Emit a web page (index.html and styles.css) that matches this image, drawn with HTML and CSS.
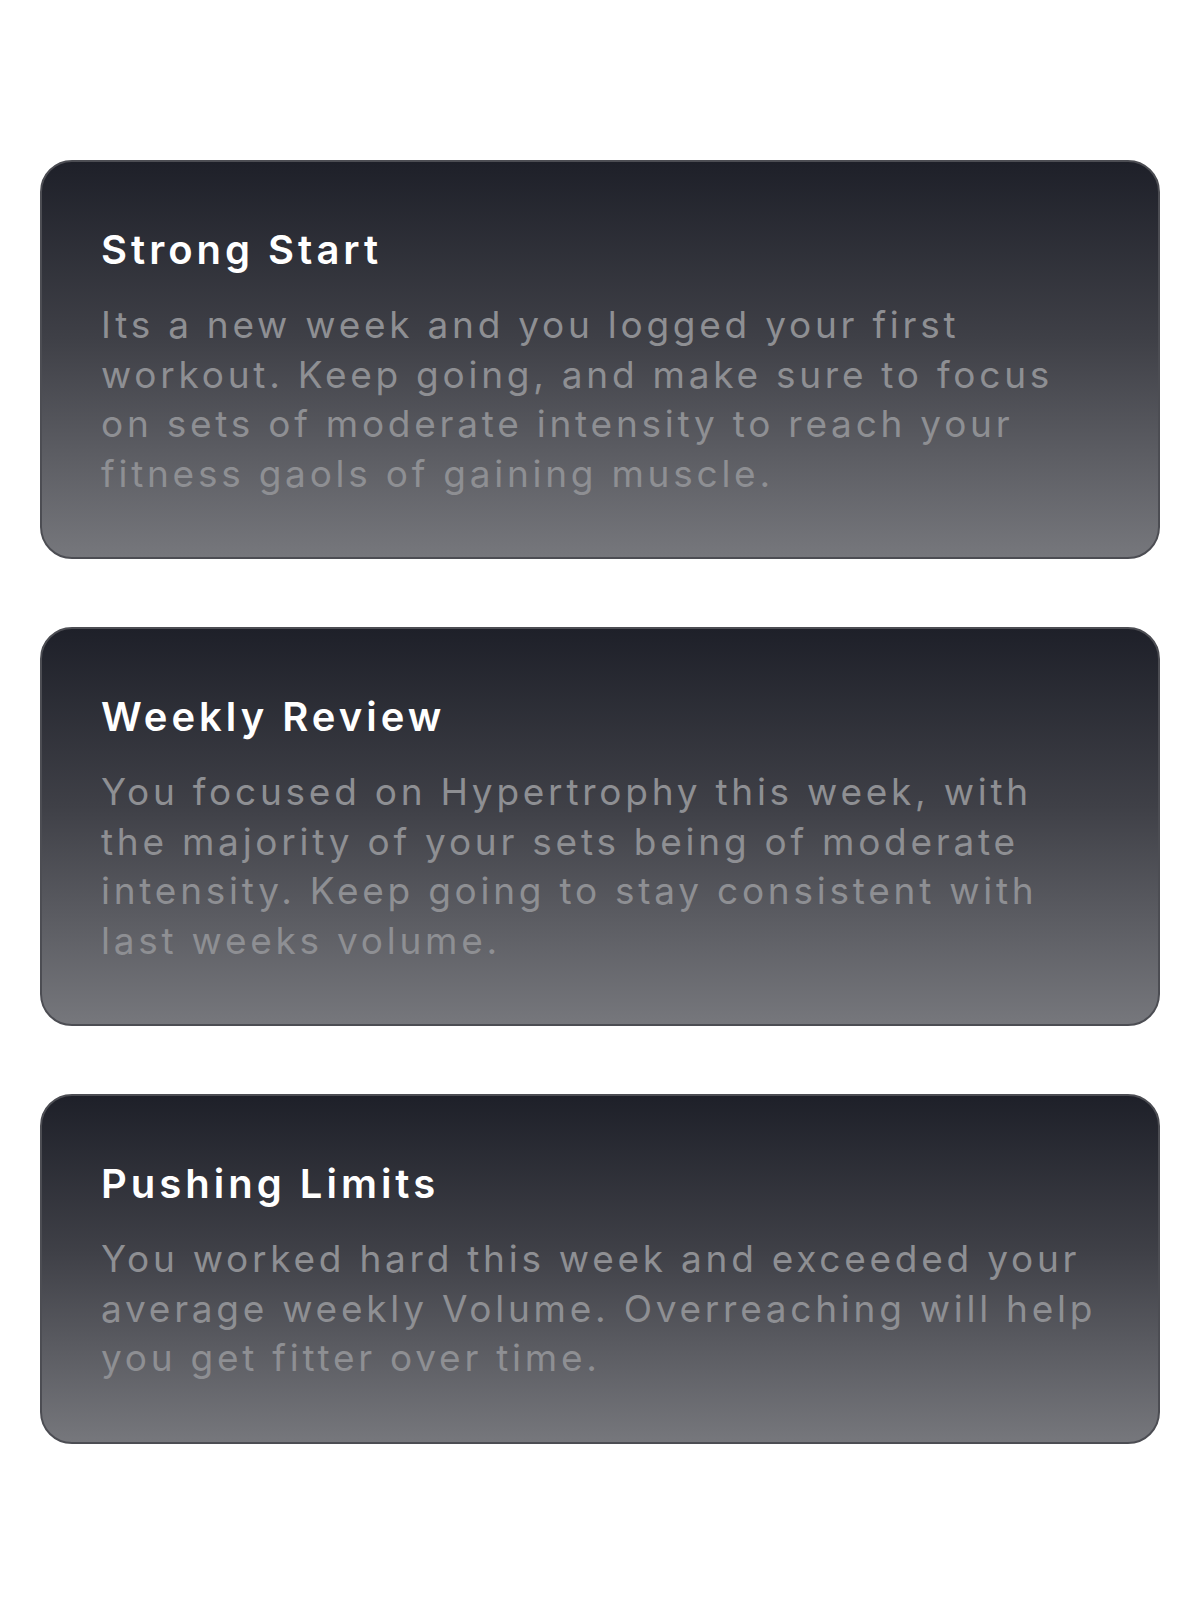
FILE: index.html
```html
<!DOCTYPE html>
<html lang="en">
<head>
<meta charset="utf-8">
<title>Insights</title>
<link rel="stylesheet" href="styles.css">
</head>
<body>
<main class="list">
  <section class="card">
    <h2 class="card-title">Strong Start</h2>
    <p class="card-text">Its a new week and you logged your first workout. Keep going, and make sure to focus on sets of moderate intensity to reach your fitness gaols of gaining muscle.</p>
  </section>
  <section class="card">
    <h2 class="card-title">Weekly Review</h2>
    <p class="card-text">You focused on Hypertrophy this week, with the majority of your sets being of moderate intensity. Keep going to stay consistent with last weeks volume.</p>
  </section>
  <section class="card">
    <h2 class="card-title">Pushing Limits</h2>
    <p class="card-text">You worked hard this week and exceeded your average weekly Volume. Overreaching will help you get fitter over time.</p>
  </section>
</main>
</body>
</html>
```
FILE: styles.css
```css
html, body {
  margin: 0;
  padding: 0;
  background: #ffffff;
}

body {
  font-family: "Inter", "Noto Sans", sans-serif;
}

.list {
  display: flex;
  flex-direction: column;
  gap: 68px;
  padding: 160px 40px 0;
}

.card {
  box-sizing: border-box;
  border: 2px solid #4c4d53;
  border-radius: 32px;
  background: linear-gradient(180deg, #1e2029 0%, #3f4047 45%, #76777c 100%);
  padding: 62px 54px 59px 59px;
  display: flex;
  flex-direction: column;
  gap: 24px;
}

.card-title {
  margin: 0;
  color: #ffffff;
  font-size: 40px;
  font-weight: 600;
  line-height: 52px;
  letter-spacing: 4px;
}

.card-text {
  margin: 0;
  color: #8e8f93;
  font-size: 37px;
  font-weight: 400;
  line-height: 49.5px;
  letter-spacing: 3.75px;
}
```
